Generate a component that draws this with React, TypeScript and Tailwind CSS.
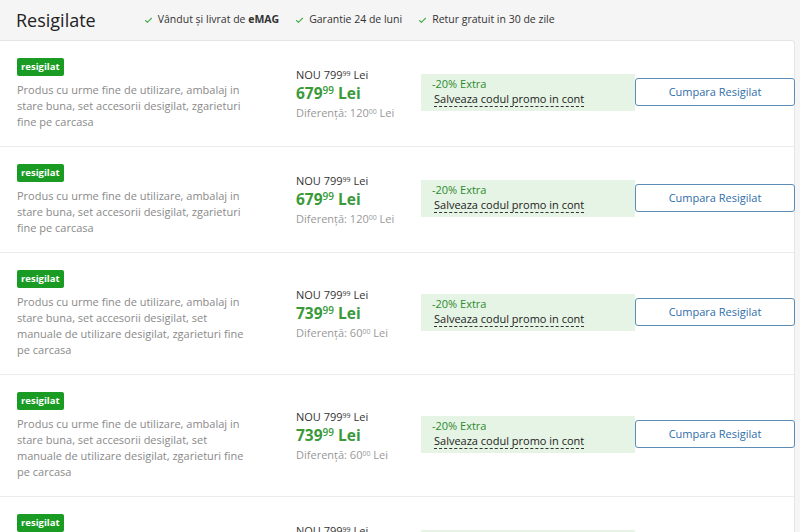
import { Check } from 'lucide-react'

interface Offer {
  description: string
  price: string
  diff: string
}

const offers: Offer[] = [
  {
    description:
      'Produs cu urme fine de utilizare, ambalaj in stare buna, set accesorii desigilat, zgarieturi fine pe carcasa',
    price: '679',
    diff: '120',
  },
  {
    description:
      'Produs cu urme fine de utilizare, ambalaj in stare buna, set accesorii desigilat, zgarieturi fine pe carcasa',
    price: '679',
    diff: '120',
  },
  {
    description:
      'Produs cu urme fine de utilizare, ambalaj in stare buna, set accesorii desigilat, set manuale de utilizare desigilat, zgarieturi fine pe carcasa',
    price: '739',
    diff: '60',
  },
  {
    description:
      'Produs cu urme fine de utilizare, ambalaj in stare buna, set accesorii desigilat, set manuale de utilizare desigilat, zgarieturi fine pe carcasa',
    price: '739',
    diff: '60',
  },
  {
    description:
      'Produs cu urme fine de utilizare, ambalaj in stare buna, set accesorii desigilat, zgarieturi fine pe carcasa',
    price: '799',
    diff: '0',
  },
]

function Perk({ children }: { children: React.ReactNode }) {
  return (
    <div className="flex items-center gap-[5px] text-[10.5px] text-[#333]">
      <Check size={9} strokeWidth={3} className="text-[#4caf50]" />
      <span>{children}</span>
    </div>
  )
}

function OfferRow({ offer }: { offer: Offer }) {
  return (
    <div className="flex items-center border-b border-[#ebebeb] pl-[17px] pt-[17px] pb-[16px]">
      {/* Description */}
      <div className="w-[232px] flex-shrink-0">
        <div className="w-fit rounded-[2px] bg-[#1a9c24] px-[4px] text-[9.5px] font-bold leading-[18px] text-white">
          resigilat
        </div>
        <p className="mt-[6px] text-[11px] leading-[16px] text-[#8a8a8a]">{offer.description}</p>
      </div>

      {/* Price */}
      <div className="ml-[47px] w-[125px] flex-shrink-0">
        <div className="mb-[1px] text-[11px] leading-[14px] text-[#333]">
          NOU 799<sup className="text-[7px]">99</sup> Lei
        </div>
        <div className="text-[15.5px] font-bold leading-[21px] text-[#3a9a3a]">
          {offer.price}
          <sup className="text-[10px] font-semibold">99</sup> Lei
        </div>
        <div className="mt-[2px] text-[11px] leading-[14px] text-[#999]">
          Diferență: {offer.diff}
          <sup className="text-[7px]">00</sup> Lei
        </div>
      </div>

      {/* Promo */}
      <div className="mb-[3px] h-[37px] w-[214px] flex-shrink-0 bg-[#e5f4e5] px-[11px] pt-[3px]">
        <div className="text-[11px] leading-[14px] text-[#2e8a2e]">-20% Extra</div>
        <div className="pl-[2px] text-[11px] leading-[16px] text-[#222]">
          <span className="border-b border-dashed border-[#333]">Salveaza codul promo in cont</span>
        </div>
      </div>

      {/* Action */}
      <button className="mb-[4px] h-[28px] w-[160px] flex-shrink-0 rounded-[3px] border border-[#5c8db7] bg-white text-[11px] text-[#2f6ea8]">
        Cumpara Resigilat
      </button>
    </div>
  )
}

export default function App() {
  return (
    <div
      className="h-[532px] overflow-hidden bg-[#f5f5f5]"
      style={{ fontFamily: '"Open Sans", "Noto Sans", sans-serif' }}
    >
      {/* Header */}
      <div className="flex h-[40px] items-center gap-[16px] pl-[16px]">
        <h2 className="mr-[32px] text-[18px] text-[#222]">Resigilate</h2>
        <Perk>
          Vândut și livrat de <b>eMAG</b>
        </Perk>
        <Perk>Garantie 24 de luni</Perk>
        <Perk>Retur gratuit in 30 de zile</Perk>
      </div>

      {/* Offer list */}
      <div className="mr-[5px] rounded-tr-[4px] border-t border-r border-[#e6e6e6] bg-white">
        {offers.map((o, i) => (
          <OfferRow key={i} offer={o} />
        ))}
      </div>
    </div>
  )
}
